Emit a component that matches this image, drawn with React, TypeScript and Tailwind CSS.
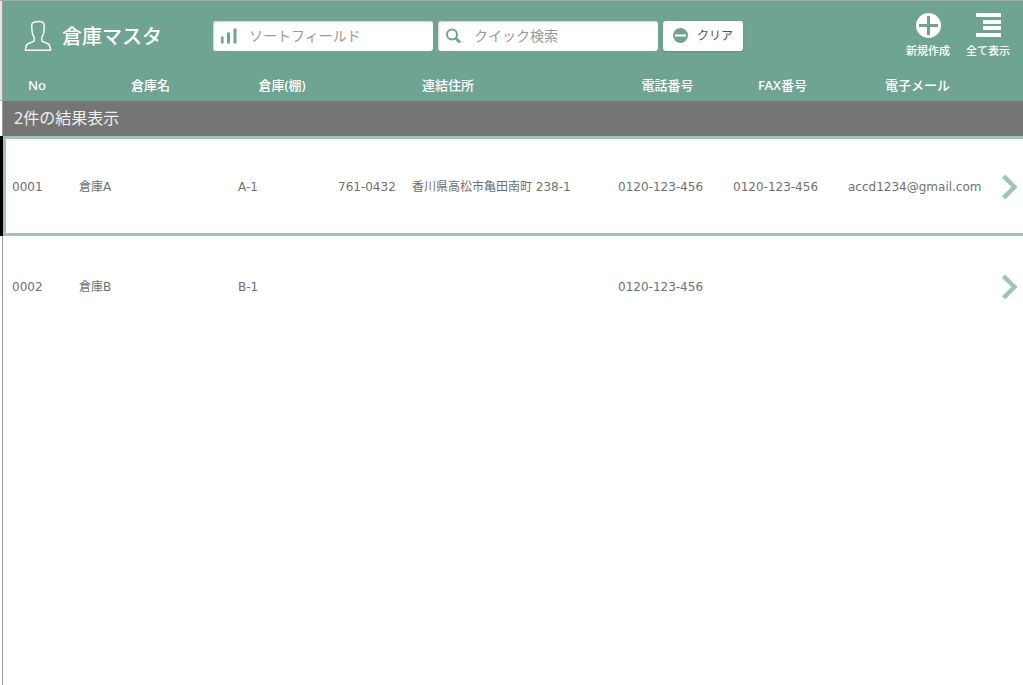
const warehouses = [
  {
    no: '0001',
    name: '倉庫A',
    shelf: 'A-1',
    zip: '761-0432',
    address: '香川県高松市亀田南町 238-1',
    tel: '0120-123-456',
    fax: '0120-123-456',
    email: 'accd1234@gmail.com',
  },
  { no: '0002', name: '倉庫B', shelf: 'B-1', zip: '', address: '', tel: '0120-123-456', fax: '', email: '' },
];

function PersonIcon() {
  return (
    <svg className="w-[28px] h-[32px]" viewBox="0 0 28 32" fill="none" stroke="white" strokeWidth="1.4" strokeLinejoin="round">
      <path d="M10 2.200Q12 1.500 15 1.500Q20.500 1.500 20.300 6L19.800 12.500Q19.500 15 17.800 17V20.500Q18 21.500 20 22.200L23.500 23.500Q26.500 25 26.500 30.300H1.500Q1.500 25 4.500 23.500L8 22.200Q10 21.500 10.200 20.500V17Q8.500 15 8.200 12.500L7.700 6Q7.700 3 10 2.200Z" />
    </svg>
  );
}

function ChevronIcon() {
  return (
    <svg width="16" height="26" viewBox="0 0 16 26" fill="none" stroke="#9fc5b5" strokeWidth="4.500">
      <path d="M1.600 2.200L12.400 13L1.600 23.800" />
    </svg>
  );
}

export default function App() {
  return (
    <div className="min-h-screen flex bg-white border-t border-[#aaa5a8]">
      {/* Record markers */}
      <div className="w-[3px] shrink-0 flex flex-col border-r border-[#999]">
        <div className="h-[100px] bg-[#e5e5e5] border-b border-[#aaa]" />
        <div className="h-[35px]" />
        <div className="h-[100px] w-[3px] bg-black" />
      </div>

      <div className="flex-1 min-w-0 font-['Noto_Sans_CJK_JP',sans-serif]">
        {/* Header */}
        <header className="h-[70px] flex items-center bg-[#6fa493] text-white">
          <div className="w-[210px] shrink-0 flex items-center pl-[21px] gap-[10px]">
            <PersonIcon />
            <h1 className="text-xl font-medium whitespace-nowrap">倉庫マスタ</h1>
          </div>

          <div className="flex gap-[5px]">
            <label className="w-[220px] h-[30px] flex items-center rounded-[3px] bg-white pl-2 shadow-[inset_1px_1px_2px_#ccc]">
              <svg className="w-4 h-4 shrink-0" viewBox="0 0 16 16" fill="#6fa493">
                <path d="M0 8.500h2.500v7H0zM6 4.500h3v11H6zM12.500 .5h3v15h-3z" />
              </svg>
              <input
                type="text"
                aria-label="ソートフィールド"
                placeholder="ソートフィールド"
                className="min-w-0 flex-1 ml-3 pb-0.5 text-sm text-[#666] placeholder:text-[#999] outline-none"
              />
            </label>
            <label className="w-[220px] h-[30px] flex items-center rounded-[3px] bg-white pl-2 shadow-[inset_1px_1px_2px_#ccc]">
              <svg className="w-4 h-4 shrink-0" viewBox="0 0 16 16" fill="none" stroke="#6fa493">
                <circle cx="6" cy="6.500" r="5" strokeWidth="2" />
                <path d="M9.500 10L14 14.500" strokeWidth="3" />
              </svg>
              <input
                type="search"
                aria-label="クイック検索"
                placeholder="クイック検索"
                className="min-w-0 flex-1 ml-3 pb-0.5 text-sm text-[#666] placeholder:text-[#999] outline-none"
              />
            </label>
            <button className="w-[80px] h-[30px] flex items-center gap-2 rounded-[3px] bg-white pl-[10px] pb-0.5 text-xs text-[#555] shadow-sm">
              <svg className="w-4 h-4 shrink-0" viewBox="0 0 16 16">
                <circle cx="7.500" cy="8.500" r="7.500" fill="#6fa493" />
                <path d="M2 8.500h11" stroke="white" strokeWidth="2" />
              </svg>
              クリア
            </button>
          </div>

          <div className="ml-auto flex pr-[5px] pb-0.5 text-[11px] leading-4 font-medium">
            <button className="w-[60px] flex flex-col items-center gap-1">
              <svg className="w-[26px] h-[26px]" viewBox="0 0 26 26">
                <circle cx="13.500" cy="13.500" r="12.500" fill="white" />
                <path d="M13.500 4v19M4 13.500h19" stroke="#6fa493" strokeWidth="3" />
              </svg>
              新規作成
            </button>
            <button className="w-[60px] flex flex-col items-center gap-1">
              <svg className="w-[26px] h-[26px]" viewBox="0 0 26 26" fill="white">
                <path d="M1 1h25v4H1zM8 8h18v4H8zM8 14h18v4H8zM1 21h25v4H1z" />
              </svg>
              全て表示
            </button>
          </div>
        </header>

        {/* List */}
        <table className="w-full table-fixed border-separate border-spacing-0 text-xs text-[#707070]">
          <colgroup>
            <col className="w-[68px]" />
            <col className="w-[159px]" />
            <col className="w-[100px]" />
            <col className="w-[74px]" />
            <col className="w-[206px]" />
            <col className="w-[115px]" />
            <col className="w-[115px]" />
            <col />
            <col className="w-[28px]" />
          </colgroup>
          <thead className="font-['Noto_Sans','Noto_Sans_CJK_JP',sans-serif]">
            <tr className="h-[30px] bg-[#6fa493] text-white text-[13px] *:p-0 *:font-medium">
              <th>No</th>
              <th>倉庫名</th>
              <th><span className="pl-1">倉庫(棚)</span></th>
              <th colSpan={2}><span className="pr-11">連結住所</span></th>
              <th>電話番号</th>
              <th>FAX番号</th>
              <th>電子メール</th>
              <td />
            </tr>
            <tr className="h-[35px] bg-[#757575]">
              <th colSpan={9} className="p-0 pl-[11px] pb-0.5 text-left text-base font-normal text-[#eee]">
                2件の結果表示
              </th>
            </tr>
          </thead>
          <tbody className="font-['DejaVu_Sans','Noto_Sans_CJK_JP',sans-serif]">
            {warehouses.map((w, i) => (
              <tr
                key={w.no}
                className={`h-[100px] *:p-0 *:pt-0.5 *:pl-2 *:border-y-3 *:first:border-l-3 *:first:pl-[6px] *:last:pl-[7px] *:whitespace-nowrap ${
                  i === 0 ? '*:border-[#9fc5b5]' : '*:border-transparent'
                }`}
              >
                <td>{w.no}</td>
                <td>{w.name}</td>
                <td>{w.shelf}</td>
                <td>{w.zip}</td>
                <td>{w.address}</td>
                <td>{w.tel}</td>
                <td>{w.fax}</td>
                <td>{w.email}</td>
                <td>
                  <button aria-label={`${w.name}の詳細`} className="block">
                    <ChevronIcon />
                  </button>
                </td>
              </tr>
            ))}
          </tbody>
        </table>
      </div>
    </div>
  );
}
